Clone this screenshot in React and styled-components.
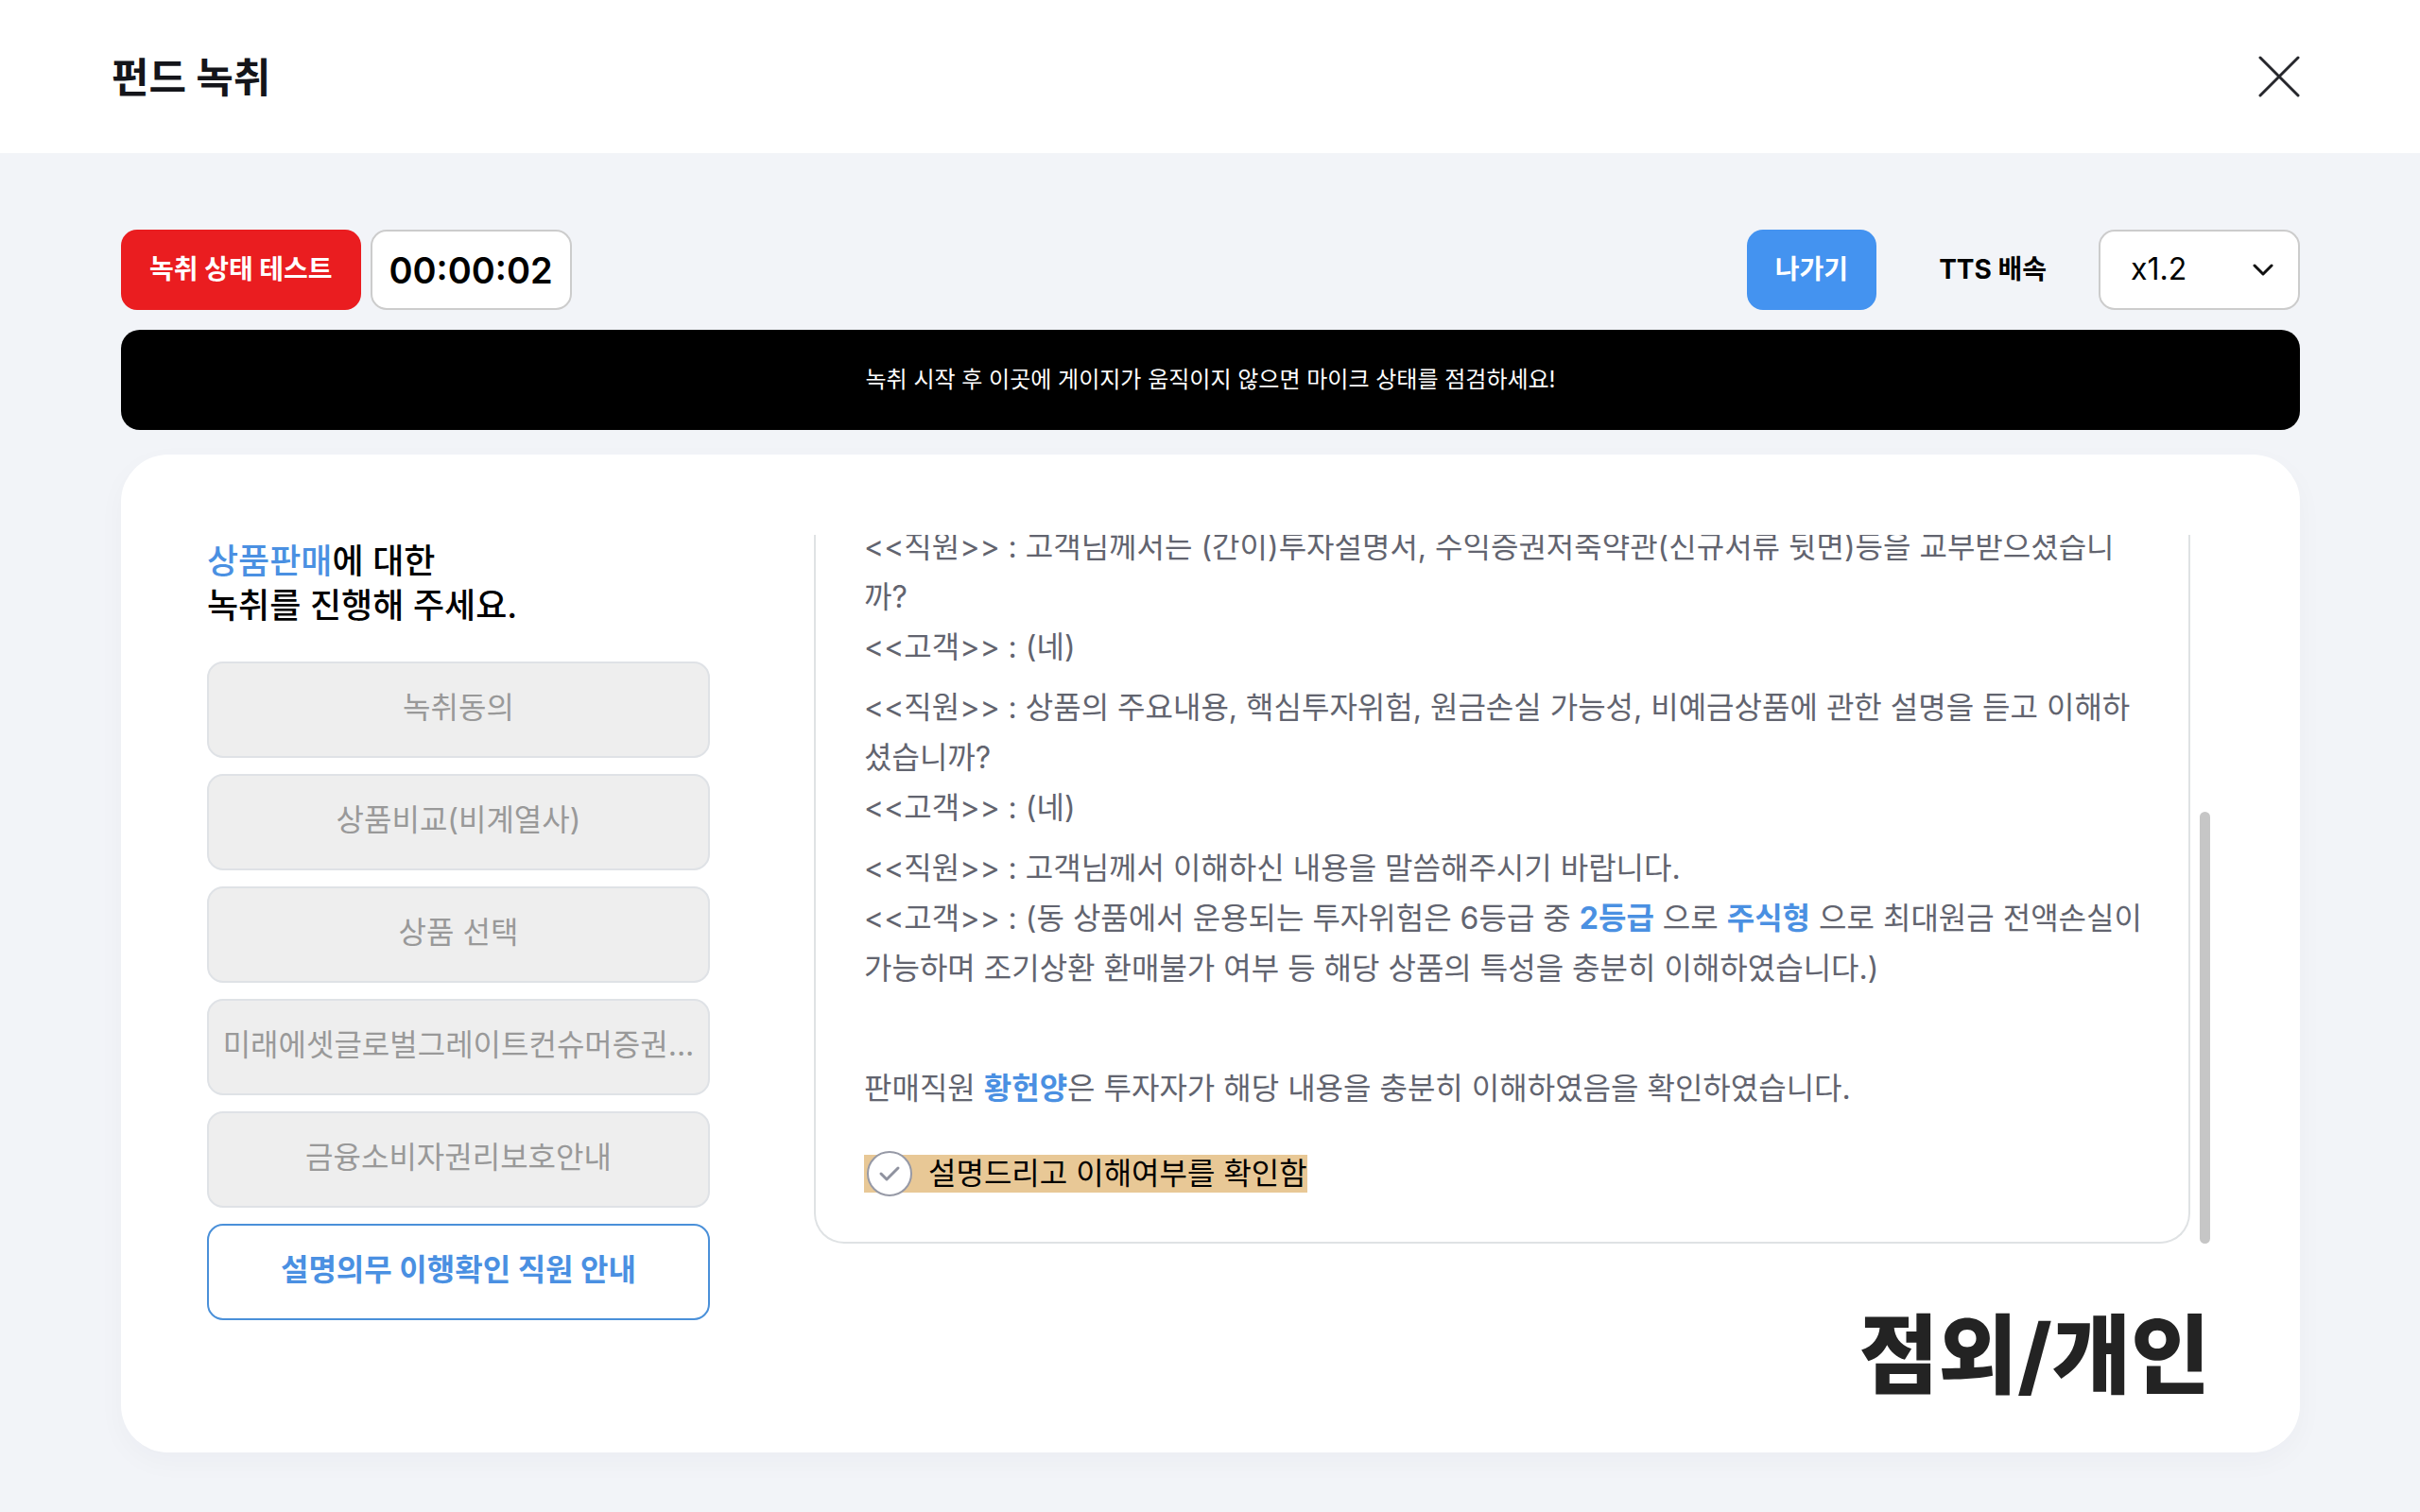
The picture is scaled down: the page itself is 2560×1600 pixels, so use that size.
import React, { useState } from "react";
import styled, { createGlobalStyle, css } from "styled-components";

const GlobalStyle = createGlobalStyle`
  *, *::before, *::after { box-sizing: border-box; }
  body {
    margin: 0;
    background: #f2f4f8;
    color: #000;
    font-family: Inter, "Noto Sans CJK KR", sans-serif;
    font-size: 32px;
  }
  button, input, select { font: inherit; color: inherit; margin: 0; }
  h1, h2, p { margin: 0; }
`;

const Page = styled.div`
  min-height: 100vh;
  display: flex;
  flex-direction: column;
`;

const Header = styled.header`
  display: flex;
  align-items: center;
  justify-content: space-between;
  height: 162px;
  padding: 0 127px 0 118px;
  background: #fff;
`;

const Title = styled.h1`
  padding-top: 2px;
  font-size: 43px;
  line-height: 64px;
  font-weight: 700;
  color: #14151a;
`;

const CloseButton = styled.button`
  display: flex;
  padding: 0;
  border: 0;
  background: none;
  cursor: pointer;
`;

const Main = styled.main`
  display: flex;
  flex-direction: column;
  padding: 81px 127px 63px 128px;
`;

const Toolbar = styled.div`
  display: flex;
  justify-content: space-between;
  margin-bottom: 21px;
`;

const ToolGroup = styled.div`
  display: flex;
  align-items: center;
  gap: 10px;
`;

const SolidButton = styled.button`
  height: 85px;
  padding: 0 30px 5px;
  border: 0;
  border-radius: 17px;
  background: ${(p) => (p.$tone === "danger" ? "#ea1d20" : "#4493f0")};
  color: #fff;
  font-size: 28px;
  font-weight: 700;
  cursor: pointer;
`;

const Timer = styled.time`
  display: flex;
  align-items: center;
  justify-content: center;
  width: 213px;
  height: 85px;
  border: 2px solid #ccc;
  border-radius: 17px;
  background: #fff;
  font-size: 38px;
  font-weight: 600;
`;

const SpeedLabel = styled.label`
  padding: 0 45px 5px 56px;
  font-size: 28px;
  font-weight: 700;
`;

const SelectBox = styled.div`
  display: grid;
  grid-template-columns: 1fr;
  align-items: center;
  width: 213px;
  height: 85px;

  select, svg { grid-area: 1 / 1; }
  svg { justify-self: end; margin-right: 28px; pointer-events: none; }
`;

const Select = styled.select`
  appearance: none;
  width: 100%;
  height: 100%;
  padding: 0 60px 2px 32px;
  border: 2px solid #ccc;
  border-radius: 17px;
  background: #fff;
  font-size: 32px;
`;

const Notice = styled.p`
  display: flex;
  align-items: center;
  justify-content: center;
  height: 106px;
  padding-bottom: 6px;
  margin-bottom: 26px;
  border-radius: 20px;
  background: #000;
  color: #fff;
  font-size: 24px;
  font-weight: 400;
`;

const Card = styled.section`
  display: flex;
  gap: 110px;
  padding: 85px 95px 45px 91px;
  border-radius: 50px;
  background: #fff;
  box-shadow: 0 10px 30px rgba(20, 30, 60, 0.03);
`;

const Side = styled.nav`
  flex: none;
  width: 532px;
`;

const SideTitle = styled.h2`
  padding-top: 5px;
  margin-bottom: 35px;
  font-size: 36px;
  line-height: 47px;
  font-weight: 500;
`;

const Accent = styled.span`
  color: #4a90e2;
  font-weight: ${(p) => (p.$strong ? 700 : "inherit")};
`;

const Steps = styled.div`
  display: flex;
  flex-direction: column;
  gap: 17px;
`;

const StepButton = styled.button`
  height: 102px;
  padding: 0 11px 10px;
  border: 2px solid #dfe2e6;
  border-radius: 17px;
  background: #eee;
  color: #999;
  font-size: 32px;
  white-space: nowrap;
  overflow: hidden;
  ${(p) =>
    p.$active &&
    css`
      border-color: #4a90d9;
      background: #fff;
      color: #4a90e2;
      font-weight: 700;
    `}
`;

const Content = styled.div`
  flex: 1;
  min-width: 0;
`;

const ScrollArea = styled.div`
  display: flex;
  gap: 10px;
  height: 750px;
  overflow: hidden;
`;

const Viewport = styled.div`
  flex: 1;
  min-width: 0;
  display: flex;
  flex-direction: column;
  justify-content: flex-end;
`;

const ScrollTrack = styled.div`
  display: flex;
  align-items: flex-end;
  width: 11px;
`;

const ScrollThumb = styled.div`
  width: 100%;
  height: 61%;
  border-radius: 6px;
  background: #c6c6c6;
`;

const Script = styled.article`
  display: flex;
  flex-direction: column;
  gap: 11px;
  padding: 0 42px 52px 51px;
  border: 2px solid #dfe2e4;
  border-top: 0;
  border-radius: 0 0 32px 32px;
  color: #62646f;
`;

const Dialogue = styled.p`
  line-height: 53px;
  word-break: break-all;
`;

const Statement = styled(Dialogue)`
  margin: 63px 0 33px;
`;

const Confirm = styled.label`
  align-self: flex-start;
  display: flex;
  align-items: center;
  gap: 17px;
  height: 40px;
  padding-left: 3px;
  background: #e8c896;
  color: #000;
  line-height: 40px;
`;

const CheckBox = styled.span`
  display: grid;
  place-items: center;
  margin: -5px 0;

  input, svg { grid-area: 1 / 1; }
  input {
    appearance: none;
    width: 48px;
    height: 48px;
    border: 2px solid #9699a6;
    border-radius: 50%;
    background: #fff;
  }
  svg { pointer-events: none; }
`;

const BranchLabel = styled.p`
  margin-top: 60px;
  font-size: 91px;
  line-height: 116px;
  font-weight: 800;
  text-align: right;
  color: #232323;
`;

const steps = [
  "녹취동의",
  "상품비교(비계열사)",
  "상품 선택",
  "미래에셋글로벌그레이트컨슈머증권...",
  "금융소비자권리보호안내",
  "설명의무 이행확인 직원 안내",
];

export default function App() {
  const [speed, setSpeed] = useState("1.2");
  const [active, setActive] = useState(5);

  return (
    <Page>
      <GlobalStyle />
      <Header>
        <Title>펀드 녹취</Title>
        <CloseButton aria-label="닫기">
          <svg width="44" height="44" viewBox="0 0 44 44" fill="none" stroke="#26272c" strokeWidth="3" strokeLinecap="round">
            <path d="M2 2l40 40M42 2L2 42" />
          </svg>
        </CloseButton>
      </Header>
      <Main>
        <Toolbar>
          <ToolGroup>
            <SolidButton $tone="danger">녹취 상태 테스트</SolidButton>
            <Timer>00:00:02</Timer>
          </ToolGroup>
          <ToolGroup>
            <SolidButton>나가기</SolidButton>
            <SpeedLabel htmlFor="speed">TTS 배속</SpeedLabel>
            <SelectBox>
              <Select id="speed" value={speed} onChange={(e) => setSpeed(e.target.value)}>
                <option value="1.0">x1.0</option>
                <option value="1.2">x1.2</option>
                <option value="1.5">x1.5</option>
              </Select>
              <svg width="22" height="14" viewBox="0 0 22 14" fill="none" stroke="#111" strokeWidth="3" strokeLinecap="round" strokeLinejoin="round">
                <path d="M2 2l9 9 9-9" />
              </svg>
            </SelectBox>
          </ToolGroup>
        </Toolbar>
        <Notice>녹취 시작 후 이곳에 게이지가 움직이지 않으면 마이크 상태를 점검하세요!</Notice>
        <Card>
          <Side>
            <SideTitle>
              <Accent>상품판매</Accent>에 대한
              <br />
              녹취를 진행해 주세요.
            </SideTitle>
            <Steps>
              {steps.map((step, i) => (
                <StepButton key={step} $active={i === active} onClick={() => setActive(i)}>
                  {step}
                </StepButton>
              ))}
            </Steps>
          </Side>
          <Content>
            <ScrollArea>
              <Viewport>
                <Script>
                  <Dialogue>
                    {"<<직원>> : 고객님께서는 (간이)투자설명서, 수익증권저축약관(신규서류 뒷면)등을 교부받으셨습니까?"}
                    <br />
                    {"<<고객>> : (네)"}
                  </Dialogue>
                  <Dialogue>
                    {"<<직원>> : 상품의 주요내용, 핵심투자위험, 원금손실 가능성, 비예금상품에 관한 설명을 듣고 이해하셨습니까?"}
                    <br />
                    {"<<고객>> : (네)"}
                  </Dialogue>
                  <Dialogue>
                    {"<<직원>> : 고객님께서 이해하신 내용을 말씀해주시기 바랍니다."}
                    <br />
                    {"<<고객>> : (동 상품에서 운용되는 투자위험은 6등급 중 "}
                    <Accent $strong>2등급</Accent> 으로 <Accent $strong>주식형</Accent>
                    {" 으로 최대원금 전액손실이 가능하며 조기상환 환매불가 여부 등 해당 상품의 특성을 충분히 이해하였습니다.)"}
                  </Dialogue>
                  <Statement>
                    판매직원 <Accent $strong>황헌양</Accent>은 투자자가 해당 내용을 충분히 이해하였음을 확인하였습니다.
                  </Statement>
                  <Confirm>
                    <CheckBox>
                      <input type="checkbox" />
                      <svg width="24" height="20" viewBox="0 0 24 20" fill="none" stroke="#8f929f" strokeWidth="3" strokeLinecap="round" strokeLinejoin="round">
                        <path d="M3 10l6 6L21 4" />
                      </svg>
                    </CheckBox>
                    설명드리고 이해여부를 확인함
                  </Confirm>
                </Script>
              </Viewport>
              <ScrollTrack>
                <ScrollThumb />
              </ScrollTrack>
            </ScrollArea>
            <BranchLabel>점외/개인</BranchLabel>
          </Content>
        </Card>
      </Main>
    </Page>
  );
}
